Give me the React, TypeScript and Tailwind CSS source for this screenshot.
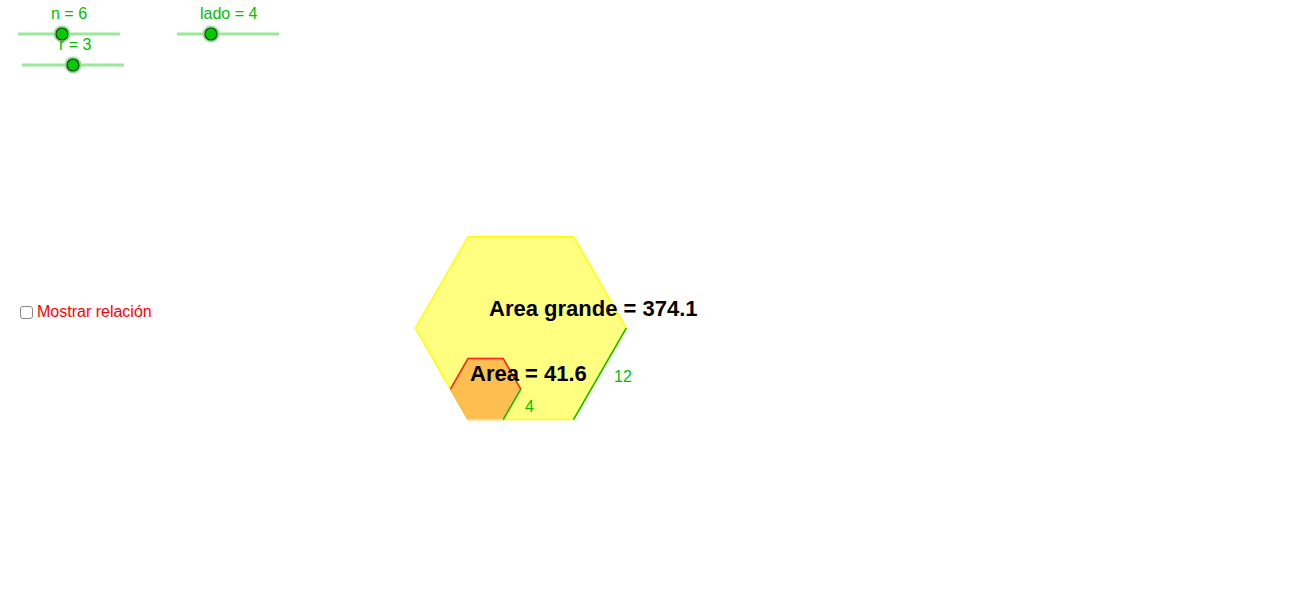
import React from 'react';

const FONT = '"Liberation Sans", Arial, sans-serif';

type SliderProps = { x1: number; x2: number; y: number; thumb: number; label: string; lx: number; ly: number };

const Slider: React.FC<SliderProps> = ({ x1, x2, y, thumb, label, lx, ly }) => (
    <g>
        <text x={lx} y={ly} fill="#00c000" fontSize={16} fontFamily={FONT}>{label}</text>
        <line x1={x1} y1={y} x2={x2} y2={y} stroke="#9ae89a" strokeWidth={3} />
        <circle cx={thumb} cy={y} r={8.5} fill="#8fe08f" />
        <circle cx={thumb} cy={y} r={6} fill="#00cc00" stroke="#1a3a1a" strokeWidth={1.2} />
    </g>
);

// hexagon vertices from bottom-left corner and side length
const hex = (bx: number, by: number, s: number) => {
    const h = s * Math.sqrt(3) / 2;
    return [
        [bx, by],
        [bx + s, by],
        [bx + s * 1.5, by - h],
        [bx + s, by - 2 * h],
        [bx, by - 2 * h],
        [bx - s * 0.5, by - h],
    ];
};

const pts = (p: number[][]) => p.map(([x, y]) => `${x},${y}`).join(' ');

export default function App() {
    const big = hex(468, 419.5, 105.5);
    const small = hex(468, 419.5, 105.5 / 3);

    return (
        <div className="relative w-[1298px] h-[600px] bg-white overflow-hidden" style={{ fontFamily: FONT }}>
            <svg className="absolute left-0 top-0" width={1298} height={600}>
                <Slider x1={18} x2={120} y={34} thumb={62} label="n = 6" lx={51} ly={19} />
                <Slider x1={177} x2={279} y={34} thumb={211} label="lado = 4" lx={200} ly={19} />
                <Slider x1={22} x2={124} y={65} thumb={73} label="r = 3" lx={59} ly={50} />

                {/* big hexagon */}
                <polygon points={pts(big)} fill="#ffff80" stroke="#ffff00" strokeWidth={1.5} />
                <line x1={big[2][0]} y1={big[2][1]} x2={big[1][0]} y2={big[1][1]} stroke="#00c000" strokeWidth={1.5} />

                {/* small hexagon */}
                <polygon points={pts(small)} fill="#ffbf50" stroke="#f0c040" strokeWidth={1.5} />
                <polyline points={pts([small[5], small[4], small[3], small[2]])} fill="none" stroke="#ff2020" strokeWidth={1.5} />
                <line x1={small[2][0]} y1={small[2][1]} x2={small[1][0]} y2={small[1][1]} stroke="#00c000" strokeWidth={1.5} />
                <line x1={small[0][0]} y1={small[0][1]} x2={small[1][0]} y2={small[1][1]} stroke="#ffd0c0" strokeWidth={1.5} />

                <text x={489} y={316} fontSize={22} fontWeight="bold" fill="#000" fontFamily={FONT}>Area grande = 374.1</text>
                <text x={470} y={381} fontSize={22} fontWeight="bold" fill="#000" fontFamily={FONT}>Area = 41.6</text>
                <text x={614} y={382} fontSize={16} fill="#00c000" fontFamily={FONT}>12</text>
                <text x={525} y={412} fontSize={16} fill="#00c000" fontFamily={FONT}>4</text>
            </svg>

            <label className="absolute left-[20px] top-[304px] flex items-center gap-[4px] text-[16px] text-[#ff0000] leading-none">
                <span className="w-[13px] h-[13px] rounded-[3px] border-[1.5px] border-[#8a8a8a] bg-white" />
                <span>Mostrar relación</span>
            </label>
        </div>
    );
}
